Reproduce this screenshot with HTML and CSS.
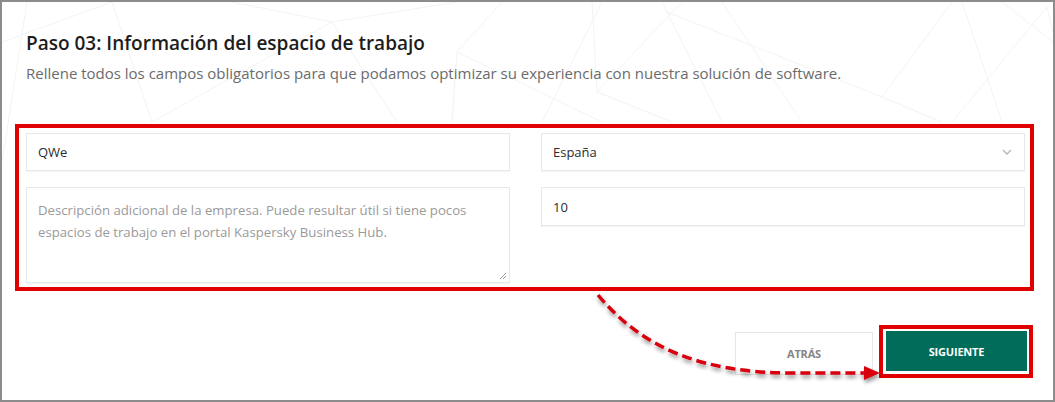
FILE: index.html
```html
<!DOCTYPE html>
<html lang="es">
<head>
<meta charset="utf-8">
<link rel="stylesheet" href="styles.css">
</head>
<body>
<div class="frame">
  <svg class="mesh" width="1051" height="398" viewBox="0 0 1051 398" aria-hidden="true">
    <g stroke="#f3f3f3" stroke-width="1" fill="none">
      <path d="M0 40 L110 0"/>
      <path d="M25 0 L0 160"/>
      <path d="M110 0 L150 120"/>
      <path d="M150 120 L330 20"/>
      <path d="M330 20 L455 0"/>
      <path d="M230 0 L330 20"/>
      <path d="M330 20 L395 120"/>
      <path d="M455 50 L500 0"/>
      <path d="M455 50 L600 120"/>
      <path d="M455 50 L450 120"/>
      <path d="M590 0 L595 90"/>
      <path d="M595 90 L680 0"/>
      <path d="M595 90 L670 120"/>
      <path d="M660 0 L720 120"/>
      <path d="M720 0 L800 120"/>
      <path d="M665 10 L880 95"/>
      <path d="M880 95 L950 0"/>
      <path d="M880 95 L940 120"/>
      <path d="M960 0 L1000 120"/>
      <path d="M950 120 L1045 5"/>
      <path d="M1045 5 L1051 30"/>
      <path d="M1000 0 L1051 40"/>
      <path d="M540 120 L600 0"/>
    </g>
  </svg>

  <header class="head">
    <h1 class="title">Paso 03: Información del espacio de trabajo</h1>
    <p class="subtitle">Rellene todos los campos obligatorios para que podamos optimizar su experiencia con nuestra solución de software.</p>
  </header>

  <section class="highlight-box">
    <div class="form-grid">
      <div class="field">QWe</div>
      <div class="field select">
        <span>España</span>
        <svg class="chevron" width="10" height="6" viewBox="0 0 10 6"><path d="M1 1 L5 5 L9 1" stroke="#b5b5b5" stroke-width="1.3" fill="none"/></svg>
      </div>
      <div class="field textarea">
        <span class="placeholder">Descripción adicional de la empresa. Puede resultar útil si tiene pocos espacios de trabajo en el portal Kaspersky Business Hub.</span>
        <svg class="grip" width="8" height="8" viewBox="0 0 8 8"><path d="M7 1 L1 7 M7 4 L4 7" stroke="#9a9a9a" stroke-width="1" fill="none"/></svg>
      </div>
      <div class="field number">10</div>
    </div>
  </section>

  <footer class="actions">
    <button class="btn btn-back">ATRÁS</button>
    <div class="btn-highlight">
      <button class="btn btn-next">SIGUIENTE</button>
    </div>
  </footer>

  <svg class="arrow" width="1051" height="398" viewBox="0 0 1051 398" aria-hidden="true">
    <defs>
      <filter id="sh" x="-10%" y="-10%" width="130%" height="140%">
        <feGaussianBlur in="SourceAlpha" stdDeviation="2"/>
        <feOffset dx="1" dy="3"/>
        <feComponentTransfer><feFuncA type="linear" slope="0.45"/></feComponentTransfer>
        <feMerge><feMergeNode/><feMergeNode in="SourceGraphic"/></feMerge>
      </filter>
    </defs>
    <g filter="url(#sh)">
      <path d="M596 293 C 640 346, 700 371, 790 371 L 862 371" stroke="#d9000d" stroke-width="3.5" stroke-dasharray="10 5" fill="none"/>
      <path d="M862 364 L878 371 L862 378 Z" fill="#d9000d"/>
    </g>
  </svg>
</div>
</body>
</html>
```

FILE: styles.css
```css
* { box-sizing: border-box; }

html, body {
  margin: 0;
  padding: 0;
  background: #ffffff;
}

body {
  font-family: "Open Sans", Lato, "Liberation Sans", sans-serif;
  width: 1055px;
  height: 402px;
  overflow: hidden;
}

.frame {
  position: relative;
  width: 1055px;
  height: 402px;
  border: 2px solid #8c8c8c;
  background: #ffffff;
  display: flex;
  flex-direction: column;
}

.mesh {
  position: absolute;
  left: 0;
  top: 0;
  z-index: 0;
}

.arrow {
  position: absolute;
  left: 0;
  top: 0;
  z-index: 3;
  pointer-events: none;
}

.head {
  position: relative;
  z-index: 1;
  padding: 29px 0 0 24px;
}

.title {
  margin: 0;
  font-size: 19px;
  line-height: 24px;
  font-weight: 600;
  color: #1d1d1b;
}

.subtitle {
  margin: 8px 0 0;
  font-size: 15px;
  line-height: 20px;
  color: #6b6b6b;
}

.highlight-box {
  position: relative;
  z-index: 1;
  margin: 41px 19px 0 13px;
  border: 4px solid #e00000;
  padding: 5px 0 4px 7px;
  background: #ffffff;
}

.form-grid {
  display: grid;
  grid-template-columns: 484px 484px;
  column-gap: 31px;
  row-gap: 16px;
  align-items: start;
}

.field {
  height: 38px;
  border: 1px solid #e8e8e8;
  box-shadow: 0 1px 1px rgba(0,0,0,0.04);
  background: #fff;
  font-size: 13px;
  color: #2b2b2b;
  padding: 0 11px;
  display: flex;
  align-items: center;
}

.select {
  justify-content: space-between;
  padding-right: 12px;
}

.textarea {
  position: relative;
  height: 96px;
  align-items: flex-start;
  padding: 11px 11px;
}

.placeholder {
  color: #9a9a9a;
  font-size: 13.2px;
  line-height: 22px;
  max-width: 450px;
}

.grip {
  position: absolute;
  right: 2px;
  bottom: 2px;
}

.number {
  height: 39px;
}

.actions {
  position: relative;
  z-index: 1;
  display: flex;
  justify-content: flex-end;
  align-items: flex-start;
  gap: 6px;
  margin: 34px 20px 0 0;
}

.btn {
  font-family: "Open Sans", Lato, "Liberation Sans", sans-serif;
  font-size: 11px;
  font-weight: 700;
  letter-spacing: -0.2px;
  cursor: pointer;
}

.btn-back {
  width: 138px;
  height: 43px;
  background: #fff;
  border: 1px solid #e6e6e6;
  color: #858585;
  margin-top: 7px;
}

.btn-highlight {
  border: 4px solid #e00000;
  padding: 2px 2px 3px 3px;
  background: #fff;
}

.btn-next {
  display: block;
  width: 141px;
  height: 40px;
  background: #006c5a;
  border: none;
  color: #ffffff;
}
```
